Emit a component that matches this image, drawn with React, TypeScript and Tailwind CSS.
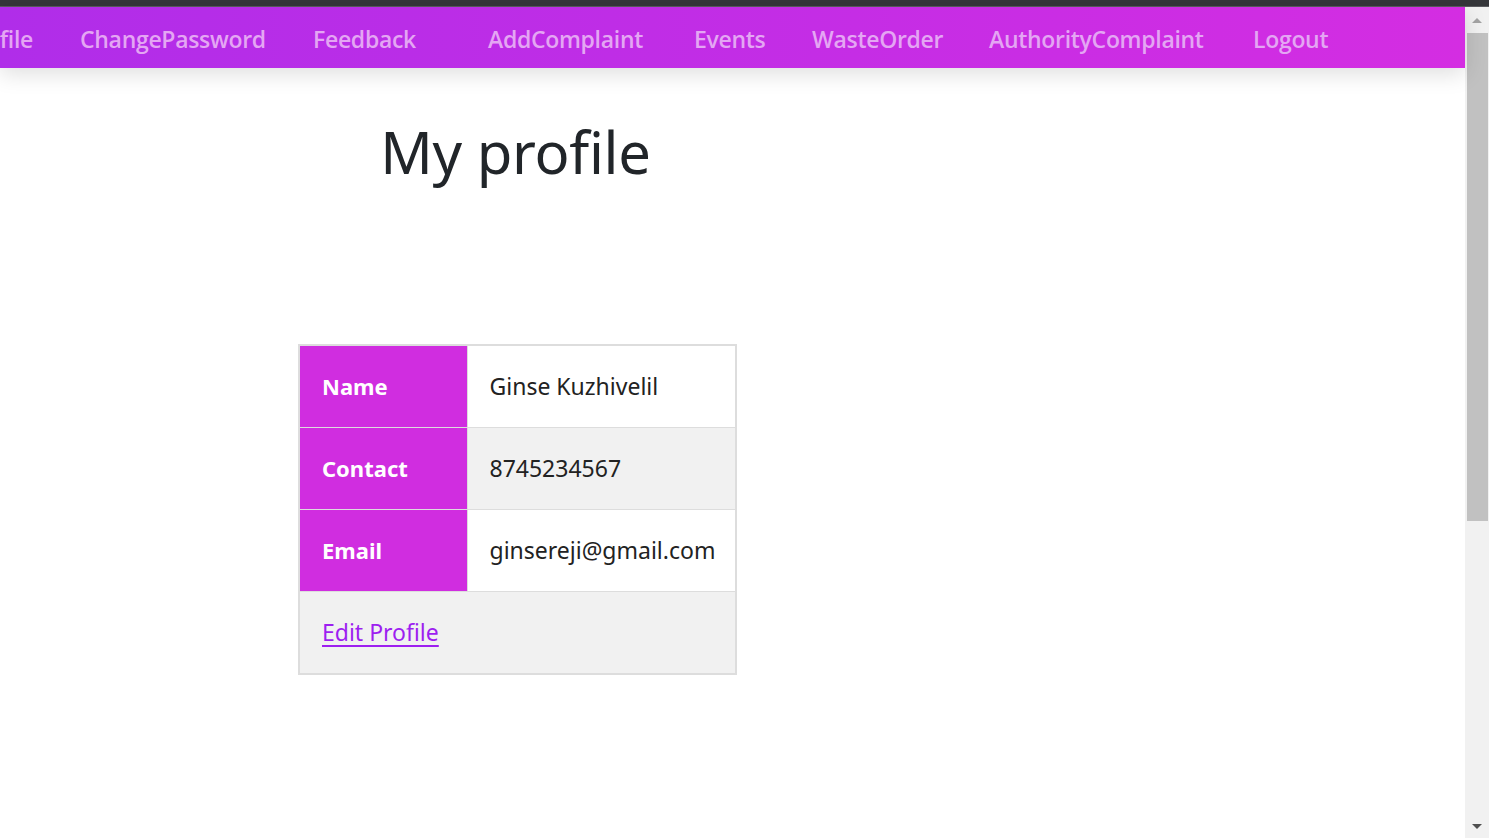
import React from 'react';

const navItems = [
    { label: "ChangePassword", width: "w-[233px]" },
    { label: "Feedback", width: "w-[175px]" },
    { label: "AddComplaint", width: "w-[206px]" },
    { label: "Events", width: "w-[118px]" },
    { label: "WasteOrder", width: "w-[177px]" },
    { label: "AuthorityComplaint", width: "w-[264px]" },
    { label: "Logout", width: "w-[120px]" }
];

const rows = [
    { label: "Name", value: "Ginse Kuzhivelil", bg: "bg-white" },
    { label: "Contact", value: "8745234567", bg: "bg-[#f1f1f1]" },
    { label: "Email", value: "ginsereji@gmail.com", bg: "bg-white" }
];

const App = () => {
    return (
        <div className="w-[1489px] h-[838px] overflow-hidden bg-white flex flex-col">
            <div className="h-[7px] bg-[#35363a] border-b border-[#5a5b5f] shrink-0" />
            <div className="flex flex-1 min-h-0">
                <main className="flex-1 relative">
                    <nav className="relative z-10 h-[61px] pt-[4px] bg-[linear-gradient(90deg,#b02de9,#d42de2)] shadow-[0_6px_22px_rgba(0,0,0,0.13)] flex items-center overflow-hidden font-['Open_Sans',sans-serif] font-semibold text-[23px] text-[#e4a6f3] tracking-[-0.3px]">
                        <div className="w-[33px] overflow-hidden flex justify-end shrink-0">
                            <span className="whitespace-nowrap">MyProfile</span>
                        </div>
                        <div className="w-[47px] shrink-0" />
                        {navItems.map((item, i) => (
                            <a key={i} className={`${item.width} shrink-0 whitespace-nowrap`}>
                                {item.label}
                            </a>
                        ))}
                    </nav>

                    <section className="ml-[298px] w-[439px] font-['Noto_Sans',sans-serif]">
                        <h1 className="text-center text-[58px] leading-none text-[#212529] pt-[55px] pr-[4px] tracking-[-0.3px]">
                            My profile
                        </h1>

                        <table className="mt-[163px] w-[439px] border-collapse border-2 border-[#dddddd] text-[23px]">
                            <tbody>
                                {rows.map((row, i) => (
                                    <tr key={i} className="h-[82px]">
                                        <th className="w-[168px] bg-[#d02de0] text-white text-[22px] font-bold text-left pl-[22px] border border-[#dddddd]">
                                            {row.label}
                                        </th>
                                        <td className={`${row.bg} text-[#222222] pl-[22px] border border-[#dddddd]`}>
                                            {row.value}
                                        </td>
                                    </tr>
                                ))}
                                <tr className="h-[83px]">
                                    <td colSpan={2} className="bg-[#f1f1f1] pl-[22px] border border-[#dddddd]">
                                        <a className="text-[#9d1ff0] underline underline-offset-[4px]">Edit Profile</a>
                                    </td>
                                </tr>
                            </tbody>
                        </table>
                    </section>
                </main>

                <aside className="w-[24px] bg-[#f1f1f1] flex flex-col items-center shrink-0">
                    <div className="h-[26px] flex items-center justify-center">
                        <div className="w-0 h-0 border-l-[5px] border-r-[5px] border-b-[5px] border-l-transparent border-r-transparent border-b-[#a3a3a3]" />
                    </div>
                    <div className="w-[21px] h-[488px] bg-[#c1c1c1]" />
                    <div className="flex-1" />
                    <div className="h-[24px] flex items-center justify-center">
                        <div className="w-0 h-0 border-l-[5px] border-r-[5px] border-t-[5px] border-l-transparent border-r-transparent border-t-[#505050]" />
                    </div>
                </aside>
            </div>
        </div>
    );
};

export default App;
